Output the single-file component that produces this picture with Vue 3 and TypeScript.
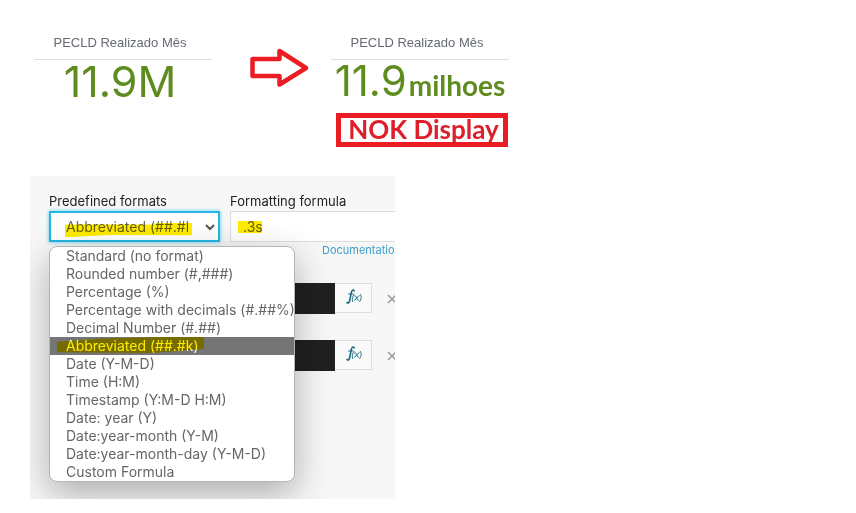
<script setup lang="ts">
import { ref } from 'vue'

const formats: string[] = [
  'Standard (no format)',
  'Rounded number (#,###)',
  'Percentage (%)',
  'Percentage with decimals (#.##%)',
  'Decimal Number (#.##)',
  'Abbreviated (##.#k)',
  'Date (Y-M-D)',
  'Time (H:M)',
  'Timestamp (Y:M-D H:M)',
  'Date: year (Y)',
  'Date:year-month (Y-M)',
  'Date:year-month-day (Y-M-D)',
  'Custom Formula',
]
const selected = ref<string>('Abbreviated (##.#k)')
const formula = ref<string>('.3s')
const rows: number[] = [1, 2]
</script>

<template>
  <main class="page">
    <section class="metrics">
      <article class="metric">
        <h2 class="metric-title">PECLD Realizado Mês</h2>
        <p class="metric-value short">11.9M</p>
      </article>
      <svg class="arrow" viewBox="0 0 60 44" aria-hidden="true">
        <path d="M2.500 13H29.500V5L56 22L29.500 38.500V30H2.500Z" fill="#fff" stroke="#ec1c24" stroke-width="4.500" stroke-linejoin="round" />
      </svg>
      <article class="metric">
        <h2 class="metric-title">PECLD Realizado Mês</h2>
        <p class="metric-value">11.9<strong class="unit">milhoes</strong></p>
        <p class="verdict">NOK Display</p>
      </article>
    </section>

    <section class="panel">
      <div class="fields">
        <div class="field format">
          <label for="format">Predefined formats</label>
          <div class="select-wrap">
            <select id="format" v-model="selected">
              <option v-for="f in formats" :key="f" :value="f">{{ f }}</option>
            </select>
            <svg class="chevron" viewBox="0 0 10 7" aria-hidden="true">
              <path d="M1 1L5 5L9 1" fill="none" stroke="#555" stroke-width="2" />
            </svg>
          </div>
          <ul class="menu" role="listbox" aria-label="Predefined formats">
            <li
              v-for="f in formats"
              :key="f"
              role="option"
              class="item"
              :class="{ active: f === selected }"
              :aria-selected="f === selected"
              @click="selected = f"
            >{{ f }}</li>
          </ul>
        </div>
        <div class="field formula">
          <label for="formula">Formatting formula</label>
          <div class="input-wrap">
            <input id="formula" v-model="formula" type="text" />
          </div>
          <a class="docs" href="#">Documentation</a>
        </div>
      </div>

      <div class="colors">
        <div v-for="r in rows" :key="r" class="color-row">
          <span class="swatch"></span>
          <button class="fx" type="button" aria-label="Edit formula">
            <svg viewBox="0 0 16 17" aria-hidden="true">
              <g fill="none" stroke="#1d6b80" stroke-linecap="round">
                <path d="M8.200 1.800C6.900.4 5.700 1.500 5.200 4L3.800 11C3.400 13.500 2.300 14.500 1 13.500" stroke-width="1.600" />
                <path d="M2.600 5H7" stroke-width="1.100" />
                <path d="M8 5.500C6.300 7.500 6 10 6.500 12.500M14.500 5.500C15.800 8 15.400 10.500 13.700 12.500" stroke-width="0.900" />
                <path d="M8.700 6.700C10.700 5.900 10.500 12 12.600 11.100M13.100 6.600L8.400 11.400" stroke-width="1" />
              </g>
            </svg>
          </button>
          <button class="remove" type="button" aria-label="Remove">
            <svg viewBox="0 0 10 10" aria-hidden="true">
              <path d="M1 1L9 9M9 1L1 9" stroke="#999" stroke-width="1.500" />
            </svg>
          </button>
        </div>
      </div>
    </section>
  </main>
</template>

<style>
body {
  background: #fff;
}
</style>

<style scoped>
.page {
  box-sizing: border-box;
  padding: 34px 30px 14px;
  font-family: Inter, "Liberation Sans", sans-serif;
}
.metrics {
  display: flex;
  align-items: flex-start;
  padding-left: 4px;
  height: 142px;
}
.metric {
  width: 178px;
}
.metric-title {
  margin: 0;
  padding: 1px 6px 8px 0;
  border-bottom: 1px solid #dedede;
  color: #666a73;
  font: 400 13px/16px "Liberation Sans", sans-serif;
  text-align: center;
}
.metric-value {
  display: flex;
  align-items: baseline;
  justify-content: center;
  height: 42px;
  margin: 0;
  color: #5f8c1f;
  font-size: 42px;
  font-weight: 400;
  line-height: 42px;
  white-space: nowrap;
}
.metric-value.short {
  padding-right: 6px;
  font-size: 43px;
}
.unit {
  margin-left: 2px;
  font-family: Lato, sans-serif;
  font-size: 28px;
  font-weight: 700;
}
.arrow {
  width: 60px;
  height: 44px;
  margin: 12px 21px 0 38px;
}
.verdict {
  box-sizing: border-box;
  margin: 11px 1px 0 5px;
  height: 34px;
  border: 5px solid #ec1c24;
  padding-left: 3px;
  color: #dc1f2b;
  font: 700 26px/23px Lato, sans-serif;
  text-align: center;
  white-space: nowrap;
}
.panel {
  box-sizing: border-box;
  max-width: 365px;
  padding: 17px 0 128px 19px;
  overflow: hidden;
  background: #f7f7f7;
}
.fields {
  display: flex;
  gap: 10px;
}
.field {
  position: relative;
  display: flex;
  flex-direction: column;
}
.format {
  width: 171px;
}
.formula {
  flex: 1;
  min-width: 0;
}
.field label {
  padding-bottom: 2px;
  color: #222;
  font-size: 13px;
  line-height: 16px;
}
.select-wrap,
.input-wrap {
  position: relative;
  height: 31px;
}
select,
input {
  box-sizing: border-box;
  width: 100%;
  height: 31px;
  margin: 0;
  border-radius: 0;
  outline: none;
  background: #fff;
  color: #666;
  font: 400 14px/18px Inter, sans-serif;
}
select {
  appearance: none;
  padding: 0 30px 0 15px;
  border: 2px solid #25b5e2;
  box-shadow: 0 0 4px #58cdef;
  text-overflow: clip;
}
input {
  padding: 0 12px;
  border: 1px solid #ddd;
  border-right: 0;
}
.select-wrap::after,
.input-wrap::after,
.item.active::after {
  position: absolute;
  background: #ffec00;
  content: "";
  mix-blend-mode: multiply;
  pointer-events: none;
}
.select-wrap::after {
  top: 12px;
  left: 16px;
  width: 127px;
  height: 14px;
  clip-path: polygon(0 10%, 70% 10%, 72% 0, 100% 0, 100% 88%, 35% 85%, 5% 100%, 0 100%);
}
.input-wrap::after {
  top: 10px;
  left: 8px;
  width: 24px;
  height: 12px;
}
.chevron {
  position: absolute;
  top: 13px;
  right: 5px;
  width: 10px;
  height: 7px;
}
.docs {
  align-self: flex-end;
  margin: 1px -6px 1px 0;
  color: #3f9fcb;
  font-size: 11px;
  line-height: 14px;
  text-decoration: none;
}
.menu {
  position: absolute;
  z-index: 2;
  top: 53px;
  left: 0;
  width: 244px;
  margin: 0;
  padding: 0;
  border: 1px solid #b5b5b5;
  border-radius: 8px;
  background: #fff;
  box-shadow: 0 12px 36px rgba(0, 0, 0, 0.3);
  list-style: none;
}
.item {
  position: relative;
  padding-left: 16px;
  color: #666;
  font-size: 14px;
  line-height: 18px;
  white-space: nowrap;
}
.item.active {
  background: #757575;
  color: #fff;
}
.item.active::after {
  top: 0;
  left: 7px;
  width: 147px;
  height: 16px;
  clip-path: polygon(0 30%, 30% 10%, 68% 0, 100% 0, 100% 75%, 65% 100%, 0 96%);
}
.colors {
  display: flex;
  flex-direction: column;
  gap: 26px;
  padding: 25px 0 0 230px;
}
.color-row {
  display: flex;
  height: 31px;
}
.swatch,
.fx,
.remove {
  flex: none;
}
.swatch {
  width: 56px;
  background: #202020;
}
.fx {
  box-sizing: border-box;
  width: 37px;
  height: 30px;
  padding: 0 0 2px 11px;
  border: 1px solid #ddd;
  border-left: 0;
  background: #fafafa;
  text-align: left;
}
.fx svg {
  display: block;
  width: 16px;
  height: 17px;
}
.remove {
  width: 24px;
  padding: 0;
  border: 0;
  background: none;
}
.remove svg {
  display: block;
  width: 10px;
  height: 10px;
  margin-left: 15px;
}
</style>
